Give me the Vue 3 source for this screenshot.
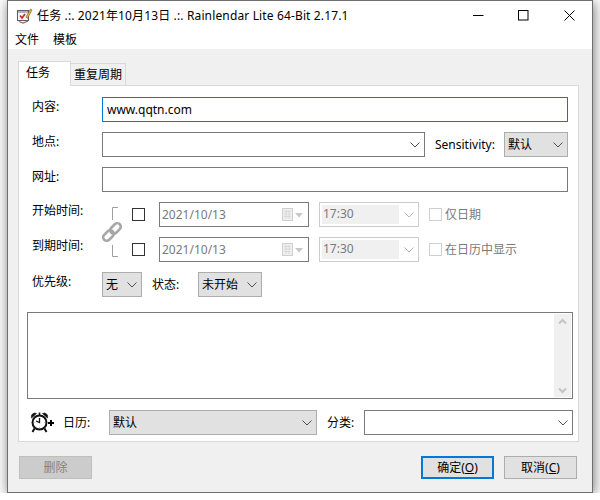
<script setup>
const chev = 'M0.5 0.5 L5 5 L9.5 0.5'
</script>

<template>
  <div class="window">
    <div class="titlebar">
      <svg class="appicon" width="17" height="17" viewBox="0 0 17 17">
        <rect x="1.500" y="3.500" width="11" height="10" fill="#f6f6f8" stroke="#5a5a70"/>
        <path d="M2 5H12" stroke="#9a9ab0" stroke-width="1.500"/>
        <path d="M4 8.500L6 11L9 7" fill="none" stroke="#d0282c" stroke-width="1.700"/>
        <path d="M10 10L14.500 2L16 3L11.500 11.500Z" fill="#e9b93a" stroke="#6f5220" stroke-width=".6"/>
        <path d="M3 14.500L7 16L12 14" fill="none" stroke="#a0645c" stroke-width="1.300"/>
      </svg>
      <span class="title">任务 .:. 2021年10月13日 .:. Rainlendar Lite 64-Bit 2.17.1</span>
      <div class="winbtns">
        <div class="winbtn"><svg width="11" height="11" viewBox="0 0 11 11"><path d="M0 5.500H10.500" stroke="#000" fill="none"/></svg></div>
        <div class="winbtn"><svg width="11" height="11" viewBox="0 0 11 11"><rect x=".5" y=".5" width="9.500" height="9.500" stroke="#000" fill="none"/></svg></div>
        <div class="winbtn"><svg width="11" height="11" viewBox="0 0 11 11"><path d="M.5 .5L10.500 10.500M10.500 .5L.5 10.500" stroke="#000" fill="none"/></svg></div>
      </div>
    </div>
    <div class="menubar"><span>文件</span><span>模板</span></div>

    <div class="body">
      <div class="tabs">
        <div class="tab active">任务</div>
        <div class="tab">重复周期</div>
      </div>
      <div class="panel">
        <div class="rows">
          <div class="row">
            <label class="lbl">内容:</label>
            <div class="field focus grow">www.qqtn.com</div>
          </div>
          <div class="row">
            <label class="lbl">地点:</label>
            <div class="field combo place">
              <svg class="chev" width="10" height="6" viewBox="0 0 10 6"><path :d="chev"/></svg>
            </div>
            <span class="lbl-inline sens">Sensitivity:</span>
            <div class="select sensel">默认
              <svg class="chev" width="10" height="6" viewBox="0 0 10 6"><path :d="chev"/></svg>
            </div>
          </div>
          <div class="row">
            <label class="lbl">网址:</label>
            <div class="field grow"></div>
          </div>

          <div class="dates">
            <label class="lbl">开始时间:</label>
            <svg class="link" width="30" height="60" viewBox="0 0 30 60">
              <path d="M10.500 18V5.500H16" fill="none" stroke="#a0a0a0"/>
              <path d="M10.500 43V54.500H16" fill="none" stroke="#a0a0a0"/>
              <g fill="none" stroke="#a8a8a8" stroke-width="2.600" transform="rotate(-45 10 30)">
                <rect x="-1" y="26.500" width="12" height="7" rx="3.500"/>
                <rect x="9" y="26.500" width="12" height="7" rx="3.500"/>
              </g>
            </svg>
            <div class="check-cell"><span class="check"></span></div>
            <div class="field date">2021/10/13
              <svg class="cal" width="21" height="13" viewBox="0 0 21 13">
                <rect x=".5" y=".5" width="10" height="12" fill="#efefef" stroke="#cfcfcf"/>
                <path d="M2 3.500H9M2 6H9M2 8.500H9M4 2V11M7 2V11" stroke="#dadada" fill="none"/>
                <path d="M13 5H21L17 9.500Z" fill="#c8c8c8"/>
              </svg>
            </div>
            <div class="field time"><span class="timeval">17:30</span>
              <svg class="chev light" width="10" height="6" viewBox="0 0 10 6"><path :d="chev"/></svg>
            </div>
            <div class="optcheck"><span class="check off"></span><span>仅日期</span></div>

            <label class="lbl">到期时间:</label>
            <div class="check-cell"><span class="check"></span></div>
            <div class="field date">2021/10/13
              <svg class="cal" width="21" height="13" viewBox="0 0 21 13">
                <rect x=".5" y=".5" width="10" height="12" fill="#efefef" stroke="#cfcfcf"/>
                <path d="M2 3.500H9M2 6H9M2 8.500H9M4 2V11M7 2V11" stroke="#dadada" fill="none"/>
                <path d="M13 5H21L17 9.500Z" fill="#c8c8c8"/>
              </svg>
            </div>
            <div class="field time"><span class="timeval">17:30</span>
              <svg class="chev light" width="10" height="6" viewBox="0 0 10 6"><path :d="chev"/></svg>
            </div>
            <div class="optcheck"><span class="check off"></span><span>在日历中显示</span></div>
          </div>

          <div class="row">
            <label class="lbl">优先级:</label>
            <div class="select pri">无
              <svg class="chev" width="10" height="6" viewBox="0 0 10 6"><path :d="chev"/></svg>
            </div>
            <span class="lbl-inline status">状态:</span>
            <div class="select stat">未开始
              <svg class="chev" width="10" height="6" viewBox="0 0 10 6"><path :d="chev"/></svg>
            </div>
          </div>
        </div>

        <div class="notes">
          <div class="scroll">
            <svg width="9" height="7" viewBox="0 0 9 7"><path d="M1 5.500L4.500 2L8 5.500" fill="none" stroke="#c4c4c4" stroke-width="2"/></svg>
            <svg width="9" height="7" viewBox="0 0 9 7"><path d="M1 1.500L4.500 5L8 1.500" fill="none" stroke="#c4c4c4" stroke-width="2"/></svg>
          </div>
        </div>

        <div class="calrow">
          <svg class="alarm" width="25" height="21" viewBox="0 0 25 21">
            <path d="M1.500 6A3.600 3.600 0 0 1 6.500 1.500ZM12.500 1.500A3.600 3.600 0 0 1 17.500 6Z" fill="#111" stroke="#111" stroke-width=".6"/>
            <path d="M9.500 .5V3" stroke="#111" stroke-width="1.600"/>
            <circle cx="9.500" cy="10.500" r="7" fill="#fff" stroke="#111" stroke-width="2"/>
            <path d="M9.500 6V10.500L6 9" fill="none" stroke="#111" stroke-width="1.300"/>
            <path d="M9.500 15.500V16.500M14.500 10.500H15.500M3.500 10.500H4.500" stroke="#777" stroke-width="1"/>
            <path d="M4.500 16.500L2.500 20M14.500 16.500L16.500 20" stroke="#111" stroke-width="2"/>
            <path d="M18 11H24M21 8V14" stroke="#000" stroke-width="2"/>
          </svg>
          <span class="lbl-inline callbl">日历:</span>
          <div class="select calsel">默认
            <svg class="chev" width="10" height="6" viewBox="0 0 10 6"><path :d="chev"/></svg>
          </div>
          <span class="lbl-inline catlbl">分类:</span>
          <div class="field combo cat">
            <svg class="chev" width="10" height="6" viewBox="0 0 10 6"><path :d="chev"/></svg>
          </div>
        </div>
      </div>

      <div class="footer">
        <button class="btn disabled">删除</button>
        <span class="spacer"></span>
        <button class="btn primary">确定(<u>O</u>)</button>
        <button class="btn">取消(<u>C</u>)</button>
      </div>
    </div>
  </div>
</template>

<style>
html, body { margin: 0; background: #fff; overflow: hidden; }
</style>

<style scoped>
.window {
  box-sizing: border-box;
  width: 586px;
  height: 493px;
  margin-left: 7px;
  border: 1px solid #6e6e6e;
  box-shadow: 1px 2px 12px rgba(0, 0, 0, .55);
  background: #fff;
  display: flex;
  flex-direction: column;
  font-family: "Noto Sans", "Noto Sans CJK SC", sans-serif;
  font-size: 12px;
  line-height: 16px;
  color: #000;
}
.titlebar { height: 29px; display: flex; align-items: center; padding-left: 8px; flex: none; }
.appicon { flex: none; }
.title { margin-left: 4px; white-space: nowrap; letter-spacing: .14px; }
.winbtns { margin-left: auto; display: flex; }
.winbtn { width: 45.5px; height: 29px; display: flex; align-items: center; justify-content: center; }
.menubar { height: 19px; display: flex; gap: 14px; padding-left: 7px; align-items: center; flex: none; }
.body { flex: 1; background: #f0f0f0; padding: 12px 13px 0 10px; display: flex; flex-direction: column; }
.tabs { display: flex; align-items: flex-end; height: 24px; position: relative; z-index: 1; }
.tab {
  box-sizing: border-box;
  height: 22px;
  width: 56px;
  border: 1px solid #d9d9d9;
  border-bottom: 0;
  margin-left: -1px;
  text-align: center;
  line-height: 22px;
  background: #f0f0f0;
}
.tab.active { width: 53px; height: 25px; margin-left: 0; margin-bottom: -1px; background: #fff; line-height: 21px; text-align: left; padding-left: 7px; }
.panel {
  box-sizing: border-box;
  height: 357px;
  background: #fff;
  border: 1px solid #d9d9d9;
  padding: 11px 5px 6px 8px;
  display: flex;
  flex-direction: column;
}
.rows { padding: 0 5px; display: flex; flex-direction: column; gap: 10px; }
.row { display: flex; height: 25px; }
.lbl { width: 70px; flex: none; padding-top: 2px; }
.dates .lbl { padding-top: 1px; }
.lbl-inline { line-height: 25px; flex: none; }
.field {
  box-sizing: border-box;
  height: 25px;
  border: 1px solid #7a7a7a;
  background: #fff;
  line-height: 23px;
  padding-left: 4px;
  position: relative;
  white-space: nowrap;
}
.grow { flex: 1; }
.focus { border-color: #0078d7; }
.place { width: 323px; }
.sens { margin-left: 10px; width: 69px; }
.select {
  box-sizing: border-box;
  height: 25px;
  border: 1px solid #adadad;
  background: #e1e1e1;
  line-height: 23px;
  padding-left: 3px;
  position: relative;
  white-space: nowrap;
}
.sensel { width: 64px; }
.chev { position: absolute; right: 4px; top: 9px; fill: none; stroke: #505050; stroke-width: 1; }
.chev.light { stroke: #b5b5b5; }
.dates {
  display: grid;
  grid-template-columns: 70px 30px 27px 150px 110px auto;
  grid-auto-rows: 25px;
  row-gap: 10px;
}
.link { grid-row: 1 / span 2; grid-column: 2; }
.check-cell { display: flex; align-items: center; }
.check { box-sizing: border-box; width: 13px; height: 13px; border: 1px solid #333; display: block; flex: none; }
.check.off { border-color: #cfcfcf; }
.date { width: 150px; color: #7a7a7a; padding-left: 2px; }
.cal { position: absolute; right: 5px; top: 5px; }
.time { width: 100px; margin-left: 10px; border-color: #ccc; color: #7a7a7a; padding-left: 2px; }
.timeval { display: block; width: 77px; height: 19px; margin-top: 2px; background: #f0f0f0; line-height: 17px; text-indent: 1px; }
.optcheck { display: flex; align-items: center; gap: 3px; margin-left: 10px; color: #7a7a7a; }
.pri { width: 40px; }
.status { margin-left: 10px; width: 46px; }
.stat { width: 64px; }
.notes { box-sizing: border-box; height: 87px; margin-top: 15px; border: 1px solid #7a7a7a; flex: none; display: flex; justify-content: flex-end; padding: 1px; }
.scroll { width: 17px; background: #f0f0f0; display: flex; flex-direction: column; justify-content: space-between; align-items: center; padding: 4px 0 3px; box-sizing: border-box; }
.calrow { display: flex; height: 25px; margin-top: 11px; padding-left: 3px; flex: none; }
.alarm { margin-top: 2px; flex: none; }
.callbl { margin-left: 8px; width: 46px; }
.calsel { width: 208px; }
.catlbl { margin-left: 10px; width: 37px; }
.cat { flex: 1; }
.footer { display: flex; gap: 10px; margin-top: 14px; padding-left: 1px; margin-right: 2px; }
.spacer { flex: 1; }
.btn {
  box-sizing: border-box;
  width: 73px;
  height: 23px;
  border: 1px solid #adadad;
  background: #e1e1e1;
  font: inherit;
  line-height: 19px;
  padding: 0;
  color: #000;
}
.btn.primary { border: 2px solid #0078d7; }
.btn.disabled { background: #cccccc; border-color: #bfbfbf; color: #838383; }
</style>
